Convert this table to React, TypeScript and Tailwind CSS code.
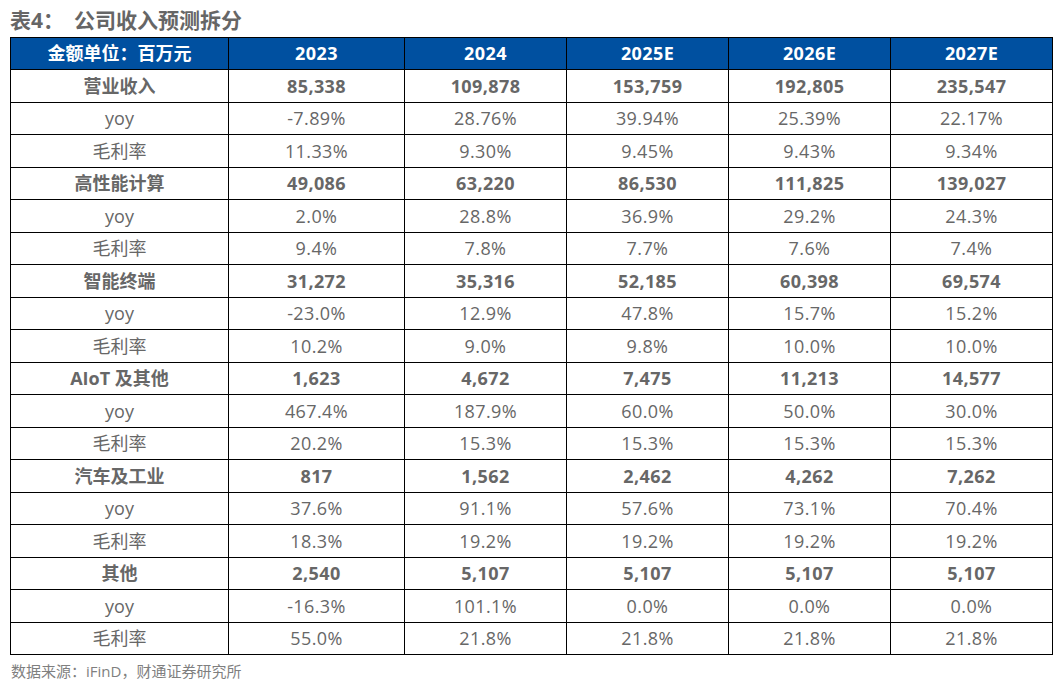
const years = ['2023', '2024', '2025E', '2026E', '2027E'];

type Row = { label: string; values: string[]; bold?: boolean };

const rows: Row[] = [
  { label: '营业收入', values: ['85,338', '109,878', '153,759', '192,805', '235,547'], bold: true },
  { label: 'yoy', values: ['-7.89%', '28.76%', '39.94%', '25.39%', '22.17%'] },
  { label: '毛利率', values: ['11.33%', '9.30%', '9.45%', '9.43%', '9.34%'] },
  { label: '高性能计算', values: ['49,086', '63,220', '86,530', '111,825', '139,027'], bold: true },
  { label: 'yoy', values: ['2.0%', '28.8%', '36.9%', '29.2%', '24.3%'] },
  { label: '毛利率', values: ['9.4%', '7.8%', '7.7%', '7.6%', '7.4%'] },
  { label: '智能终端', values: ['31,272', '35,316', '52,185', '60,398', '69,574'], bold: true },
  { label: 'yoy', values: ['-23.0%', '12.9%', '47.8%', '15.7%', '15.2%'] },
  { label: '毛利率', values: ['10.2%', '9.0%', '9.8%', '10.0%', '10.0%'] },
  { label: 'AIoT 及其他', values: ['1,623', '4,672', '7,475', '11,213', '14,577'], bold: true },
  { label: 'yoy', values: ['467.4%', '187.9%', '60.0%', '50.0%', '30.0%'] },
  { label: '毛利率', values: ['20.2%', '15.3%', '15.3%', '15.3%', '15.3%'] },
  { label: '汽车及工业', values: ['817', '1,562', '2,462', '4,262', '7,262'], bold: true },
  { label: 'yoy', values: ['37.6%', '91.1%', '57.6%', '73.1%', '70.4%'] },
  { label: '毛利率', values: ['18.3%', '19.2%', '19.2%', '19.2%', '19.2%'] },
  { label: '其他', values: ['2,540', '5,107', '5,107', '5,107', '5,107'], bold: true },
  { label: 'yoy', values: ['-16.3%', '101.1%', '0.0%', '0.0%', '0.0%'] },
  { label: '毛利率', values: ['55.0%', '21.8%', '21.8%', '21.8%', '21.8%'] },
];

const font = { fontFamily: '"Open Sans", "Noto Sans CJK SC", sans-serif' };

export default function App() {
  return (
    <div className="w-[1064px] h-[688px] bg-white overflow-hidden" style={font}>
      <div className="pl-[10px] pt-[6px] h-[37px] text-[21px] font-bold text-[#666666] leading-[29px] whitespace-nowrap">
        表4：<span className="ml-[10px]">公司收入预测拆分</span>
      </div>

      <div className="ml-[10px] w-[1043px] border-l border-t border-black grid grid-cols-[218px_176px_162px_162px_162px_162px]">
        <div className="h-[32px] bg-[#0050a0] border-r border-b border-black flex items-center justify-center text-white font-bold text-[18px]">
          金额单位：百万元
        </div>
        {years.map((y) => (
          <div
            key={y}
            className="h-[32px] bg-[#0050a0] border-r border-b border-black flex items-center justify-center text-white font-bold text-[18px] tracking-[0.4px]"
          >
            {y}
          </div>
        ))}

        {rows.map((r, i) => {
          const h = i % 2 === 0 ? 'h-[33px]' : 'h-[32px]';
          const weight = r.bold ? 'font-bold' : 'font-normal';
          return [r.label, ...r.values].map((v, j) => (
            <div
              key={`${i}-${j}`}
              className={`${h} ${weight} ${j > 0 ? 'tracking-[0.4px]' : ''} border-r border-b border-black flex items-center justify-center text-[18px] text-[#676767]`}
            >
              {v}
            </div>
          ));
        })}
      </div>

      <div className="pl-[11px] pt-[5px] text-[15px] text-[#7f7f7f] leading-[22px]">
        数据来源：iFinD，财通证券研究所
      </div>
    </div>
  );
}
